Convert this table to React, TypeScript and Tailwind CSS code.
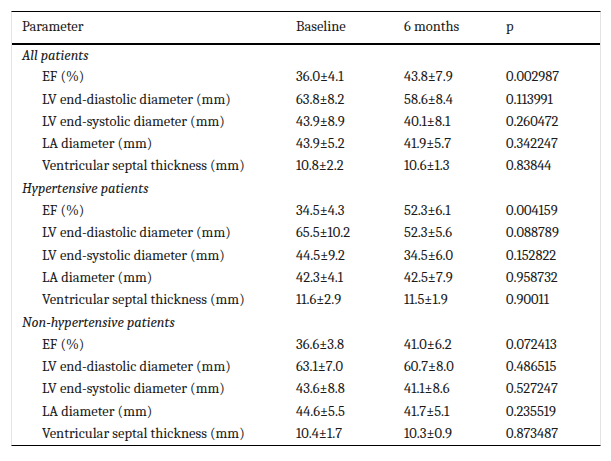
const groups = [
  {
    title: "All patients",
    rows: [
      ["EF (%)", "36.0±4.1", "43.8±7.9", "0.002987"],
      ["LV end-diastolic diameter (mm)", "63.8±8.2", "58.6±8.4", "0.113991"],
      ["LV end-systolic diameter (mm)", "43.9±8.9", "40.1±8.1", "0.260472"],
      ["LA diameter (mm)", "43.9±5.2", "41.9±5.7", "0.342247"],
      ["Ventricular septal thickness (mm)", "10.8±2.2", "10.6±1.3", "0.83844"],
    ],
  },
  {
    title: "Hypertensive patients",
    rows: [
      ["EF (%)", "34.5±4.3", "52.3±6.1", "0.004159"],
      ["LV end-diastolic diameter (mm)", "65.5±10.2", "52.3±5.6", "0.088789"],
      ["LV end-systolic diameter (mm)", "44.5±9.2", "34.5±6.0", "0.152822"],
      ["LA diameter (mm)", "42.3±4.1", "42.5±7.9", "0.958732"],
      ["Ventricular septal thickness (mm)", "11.6±2.9", "11.5±1.9", "0.90011"],
    ],
  },
  {
    title: "Non-hypertensive patients",
    rows: [
      ["EF (%)", "36.6±3.8", "41.0±6.2", "0.072413"],
      ["LV end-diastolic diameter (mm)", "63.1±7.0", "60.7±8.0", "0.486515"],
      ["LV end-systolic diameter (mm)", "43.6±8.8", "41.1±8.6", "0.527247"],
      ["LA diameter (mm)", "44.6±5.5", "41.7±5.1", "0.235519"],
      ["Ventricular septal thickness (mm)", "10.4±1.7", "10.3±0.9", "0.873487"],
    ],
  },
];

export default function App() {
  return (
    <div className="min-h-[461px] w-[611px] bg-white pt-[11px] pl-[11px] font-serif text-[14.5px] leading-[1.4] text-[#1a1a1a]">
      <div className="w-[590px] border-t border-b border-black border-l border-r border-l-[#e4e4e4] border-r-[#e4e4e4]">
        <table className="w-full border-collapse">
          <thead>
            <tr className="h-[32px] border-b-2 border-black">
              <th className="w-[284px] pl-[10px] text-left font-normal">Parameter</th>
              <th className="w-[108px] text-left font-normal">Baseline</th>
              <th className="w-[102px] text-left font-normal">6 months</th>
              <th className="text-left font-normal">p</th>
            </tr>
          </thead>
          <tbody>
            {groups.map((g) => (
              <>
                <tr key={g.title} className="h-[22.3px]">
                  <td colSpan={4} className="pl-[10px] italic">
                    {g.title}
                  </td>
                </tr>
                {g.rows.map((r) => (
                  <tr key={g.title + r[0]} className="h-[22.3px]">
                    <td className="pl-[30px]">{r[0]}</td>
                    <td>{r[1]}</td>
                    <td>{r[2]}</td>
                    <td>{r[3]}</td>
                  </tr>
                ))}
              </>
            ))}
          </tbody>
        </table>
      </div>
    </div>
  );
}
